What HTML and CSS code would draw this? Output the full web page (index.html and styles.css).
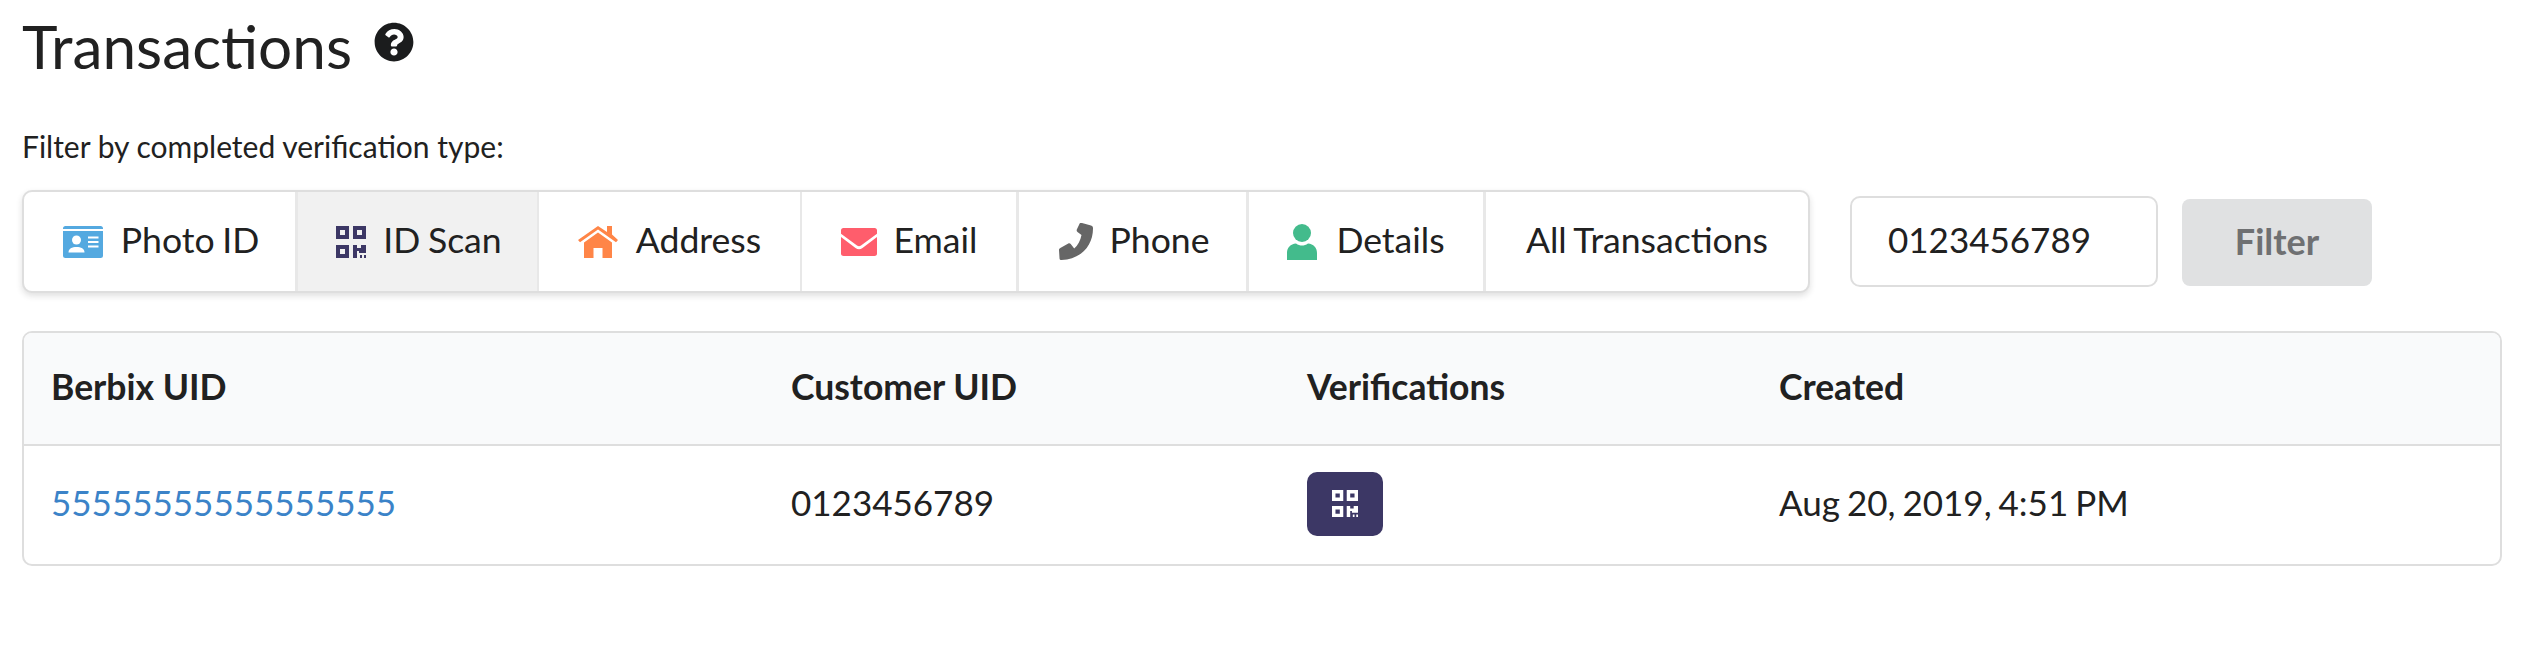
FILE: index.html
```html
<!DOCTYPE html>
<html lang="en">
<head>
<meta charset="utf-8">
<title>Transactions</title>
<link rel="stylesheet" href="styles.css">
</head>
<body>
<main class="page">
  <h1 class="title">Transactions
    <svg class="help" viewBox="0 0 512 512"><path fill="#1b1c1d" d="M504 256c0 136.997-111.043 248-248 248S8 392.997 8 256C8 119.083 119.043 8 256 8s248 111.083 248 248zM262.655 90c-54.497 0-89.255 22.957-116.549 63.758-3.536 5.286-2.353 12.415 2.715 16.258l34.699 26.31c5.205 3.947 12.621 3.008 16.665-2.122 17.864-22.658 30.113-35.797 57.303-35.797 20.429 0 45.698 13.148 45.698 32.958 0 14.976-12.363 22.667-32.534 33.976C247.128 238.528 216 254.941 216 296v4c0 6.627 5.373 12 12 12h56c6.627 0 12-5.373 12-12v-1.333c0-28.462 83.186-29.647 83.186-106.667 0-58.002-60.165-102-116.531-102zM256 338c-25.365 0-46 20.635-46 46 0 25.364 20.635 46 46 46s46-20.636 46-46c0-25.365-20.635-46-46-46z"/></svg>
  </h1>
  <p class="label">Filter by completed verification type:</p>
  <div class="filters">
    <nav class="menu">
      <a class="item item-photo">
        <svg class="icon icon-photo" viewBox="0 0 40 32"><path fill="#54a9e0" d="M2.500 0h35A2.500 2.500 0 0 1 40 2.500V3H0v-.5A2.500 2.500 0 0 1 2.500 0zM0 5h40v24.500a2.500 2.500 0 0 1-2.500 2.500h-35A2.500 2.500 0 0 1 0 29.500z"/><circle cx="13.500" cy="14" r="4.500" fill="#fff"/><path fill="#fff" d="M5.500 26.500c0-4 3.500-5.500 8-5.500s8 1.500 8 5.500z"/><path fill="#fff" d="M25 10.500h10.500v2H25zM25 15h10.500v2H25zM25 19.500h10.500v2H25z"/></svg>
        <span class="txt">Photo ID</span>
      </a>
      <a class="item item-scan is-active">
        <svg class="icon icon-qr" viewBox="0 0 30 32"><use href="#qr"/></svg>
        <span class="txt">ID Scan</span>
      </a>
      <a class="item item-address">
        <svg class="icon icon-home" viewBox="0 0 40 32"><path fill="#ff8547" d="M29 0h5v8.500l6 5.500-2 2.200L20 3.600 2 16.200 0 14 20 0l9 6z"/><path fill="#ff8547" d="M20 6.500l14 10V32H24.500V22h-9v10H6V16.500z"/></svg>
        <span class="txt">Address</span>
      </a>
      <a class="item item-email">
        <svg class="icon icon-mail" viewBox="0 0 36 28"><path fill="#ff5d6c" d="M2.500 0h31A2.500 2.500 0 0 1 36 2.500v3.200L20 17.500a3.500 3.500 0 0 1-4 0L0 5.700V2.500A2.500 2.500 0 0 1 2.500 0z"/><path fill="#ff5d6c" d="M0 9l14.500 11a6 6 0 0 0 7 0L36 9v16.500a2.500 2.500 0 0 1-2.500 2.500h-31A2.500 2.500 0 0 1 0 25.500z"/></svg>
        <span class="txt">Email</span>
      </a>
      <a class="item item-phone">
        <svg class="icon icon-phone" viewBox="0 0 34 37"><path fill="#666" d="M23 0l9 2.500c1.500.4 2 1.300 2 3C34 22 23 36 2.500 37 1 37 .5 36.500.5 35L0 27c0-1 .5-1.500 1.300-2l8-4.500c1-.5 1.800-.2 2.400.6l3.500 4.500c3.500-3 6.300-8 7.300-13.600l-4-3c-.8-.6-1-1.400-.7-2.400l3-6.300c.4-.7 1-1 2.200-.8z"/></svg>
        <span class="txt">Phone</span>
      </a>
      <a class="item item-details">
        <svg class="icon icon-user" viewBox="0 0 30 36"><ellipse cx="15" cy="9" rx="9" ry="9" fill="#43bb8c"/><path fill="#43bb8c" d="M0 36V29c0-5.500 3.500-9 9-9.500 2 1.500 4 2 6 2s4-.5 6-2c5.500.5 9 4 9 9.500v7z"/></svg>
        <span class="txt">Details</span>
      </a>
      <a class="item item-all"><span class="txt">All Transactions</span></a>
    </nav>
    <input class="search" type="text" value="0123456789">
    <button class="filter-btn" type="button"><span class="txt">Filter</span></button>
  </div>
  <table class="table">
    <thead>
      <tr>
        <th class="col-1">Berbix UID</th>
        <th class="col-2">Customer UID</th>
        <th class="col-3">Verifications</th>
        <th class="col-4">Created</th>
      </tr>
    </thead>
    <tbody>
      <tr>
        <td class="cell-uid"><a class="link">55555555555555555</a></td>
        <td>0123456789</td>
        <td class="cell-badge"><span class="badge"><svg class="badge-qr" viewBox="0 0 30 32" preserveAspectRatio="none"><use href="#qr"/></svg></span></td>
        <td class="date">Aug 20, 2019, 4:51 PM</td>
      </tr>
    </tbody>
  </table>
</main>
<svg class="defs" width="0" height="0">
  <symbol id="qr" viewBox="0 0 30 32">
    <path fill="currentColor" fill-rule="evenodd" d="M0 0h13v13H0zM4 4v5h5V4zM17 0h13v13H17zM21 4v5h5V4zM0 19h13v13H0zM4 23v5h5v-5zM17 19h4v3h4v-3h5v8h-7v-2h-2v7h-4z"/>
    <path fill="currentColor" d="M24 29h2v3h-2zM28 29h2v3h-2z"/>
  </symbol>
</svg>
</body>
</html>
```
FILE: styles.css
```css
* { box-sizing: border-box; }
html, body { margin: 0; background: #fff; }
body {
  font-family: Lato, "Helvetica Neue", Arial, sans-serif;
  color: #212121;
  font-size: 30px;
}
.page { padding: 0 32px 0 22px; }
.title {
  margin: 0;
  padding-top: 14px;
  height: 124px;
  font-size: 60.3px;
  line-height: 64px;
  font-weight: 400;
  display: flex;
  align-items: flex-start;
}
.help { width: 40px; height: 40px; margin: 8px 0 0 22px; }
.label { margin: 0; height: 66px; line-height: 36px; padding-top: 4px; font-size: 30px; }
.filters { display: flex; align-items: center; height: 103px; }
.menu {
  display: flex;
  height: 103px;
  width: 1788px;
  border: 2px solid #dedede;
  border-radius: 10px;
  box-shadow: 0 3px 6px rgba(34, 36, 38, .14);
  overflow: hidden;
  background: #fff;
}
.item {
  display: flex;
  align-items: center;
  justify-content: center;
  gap: 18px;
  font-size: 35.6px;
  word-spacing: -1.5px;
  border-right: 3px solid #e8e8e8;
}
.txt { display: block; padding-bottom: 4px; }
.item-photo { width: 274px; padding-left: 3px; }
.item-scan { width: 241px; border-right-width: 2px; padding-left: 3px; gap: 17px; }
.item-address { width: 263px; border-right-width: 2px; }
.item-email { width: 217px; gap: 17px; }
.item-phone { width: 230px; padding-left: 3px; gap: 17px; }
.item-details { width: 237px; gap: 19px; }
.item-all { flex: 1; border-right: 0; }
.is-active { background: #f1f1f1; }
.icon { display: block; flex: none; }
.icon-photo { width: 40px; height: 32px; }
.icon-qr { width: 30px; height: 32px; color: #3c3765; }
.icon-home { width: 40px; height: 32px; }
.icon-mail { width: 36px; height: 28px; }
.icon-phone { width: 34px; height: 37px; }
.icon-user { width: 30px; height: 36px; }
.search {
  margin-left: 40px;
  width: 308px;
  height: 91px;
  border: 2px solid #dedede;
  border-radius: 10px;
  padding: 0 36px 5px;
  font: 400 35px Lato, sans-serif;
  color: #212121;
  outline: 0;
}
.filter-btn {
  margin: 2px 0 0 24px;
  width: 190px;
  height: 87px;
  border: 0;
  border-radius: 8px;
  background: #e0e1e2;
  color: #6f7072;
  font: 700 36px Lato, sans-serif;
}
.table {
  margin-top: 38px;
  width: 2480px;
  table-layout: fixed;
  border-collapse: separate;
  border-spacing: 0;
  border: 2px solid #dedede;
  border-radius: 10px;
  font-size: 35px;
}
.col-1 { width: 739px; }
.col-2 { width: 516px; }
.col-3 { width: 473px; }
th {
  height: 113px;
  padding: 0 0 4px 28px;
  background: #f9fafb;
  text-align: left;
  font-size: 35.5px;
  font-weight: 700;
  border-bottom: 2px solid #dedede;
}
th:first-child { border-top-left-radius: 8px; }
th:last-child { border-top-right-radius: 8px; }
td { height: 118px; padding: 0 0 7px 28px; }
.col-1, .col-4, .cell-uid, .date { padding-left: 27px; }
.cell-badge { padding-bottom: 3px; }
.date { word-spacing: -2px; }
.link { color: #3b83c8; }
.badge {
  display: flex;
  align-items: center;
  justify-content: center;
  width: 76px;
  height: 64px;
  border-radius: 10px;
  background: #3c3765;
}
.badge-qr { width: 26px; height: 27px; color: #fff; display: block; }
.defs { position: absolute; }
```
